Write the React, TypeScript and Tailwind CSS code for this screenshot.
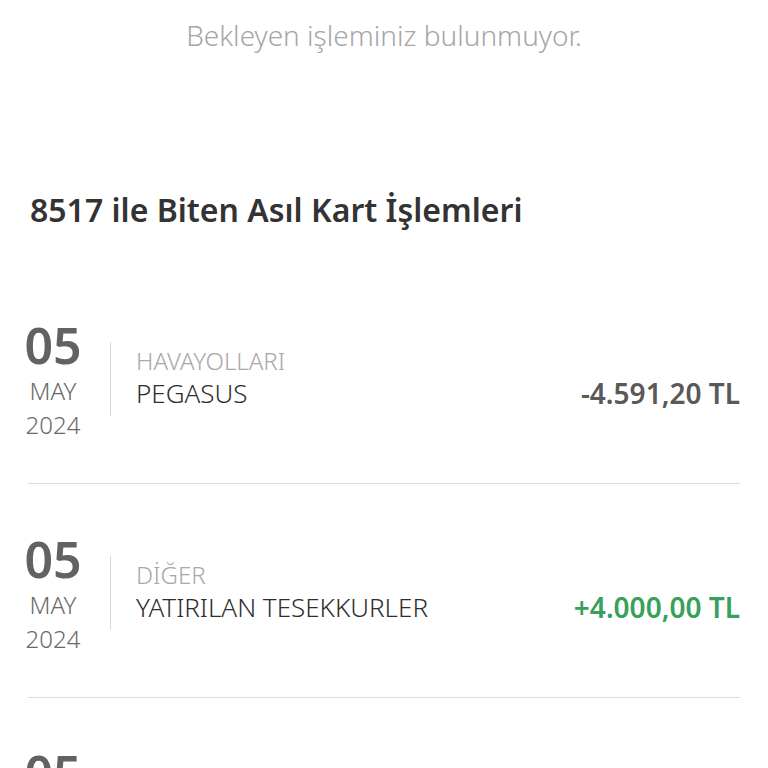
const font = { fontFamily: '"Noto Sans", "Open Sans", sans-serif' }

type Tx = {
  day: string
  month: string
  year: string
  category: string
  title: string
  amount: string
  positive?: boolean
}

const transactions: Tx[] = [
  { day: '05', month: 'MAY', year: '2024', category: 'HAVAYOLLARI', title: 'PEGASUS', amount: '-4.591,20 TL' },
  { day: '05', month: 'MAY', year: '2024', category: 'DİĞER', title: 'YATIRILAN TESEKKURLER', amount: '+4.000,00 TL', positive: true },
  { day: '05', month: 'MAY', year: '2024', category: 'MARKET', title: 'MIGROS', amount: '-250,00 TL' },
]

function TxRow({ tx }: { tx: Tx }) {
  return (
    <div className="h-[214px] shrink-0 border-b border-[#dcdcdc] pt-[50px]">
      <div className="flex items-start">
        <div className="w-[54px] -ml-[2px] flex flex-col items-center">
          <span className="text-[50px] leading-[50px] font-semibold font-stretch-semi-condensed text-[#626262]">
            {tx.day}
          </span>
          <span className="mt-[4px] text-[24px] leading-[33px] font-light text-[#6a6a6a]">{tx.month}</span>
          <span className="mt-[1px] text-[24px] leading-[33px] font-light text-[#6a6a6a]">{tx.year}</span>
        </div>
        <div className="w-px h-[74px] bg-[#d9d9d9] mt-[22px] ml-[30px]" />
        <div className="flex-1 flex items-end pl-[25px] pt-[26px]">
          <div className="flex-1 flex flex-col">
            <span className="text-[24px] leading-[30px] font-light text-[#a8a8a8]">{tx.category}</span>
            <span className="text-[26px] leading-[34px] font-light text-[#2e2e2e]">{tx.title}</span>
          </div>
          <span
            className={`text-[28px] leading-[34px] font-semibold ${tx.positive ? 'text-[#37a05b]' : 'text-[#595959]'}`}
          >
            {tx.amount}
          </span>
        </div>
      </div>
    </div>
  )
}

export default function App() {
  return (
    <div className="w-[768px] h-[768px] overflow-hidden bg-white" style={font}>
      <p className="pt-[18px] text-center text-[28px] leading-[34px] font-light text-[#a6a6a6]">
        Bekleyen işleminiz bulunmuyor.
      </p>
      <h2 className="mt-[138px] pl-[30px] text-[32px] leading-[40px] font-semibold text-[#333]">
        8517 ile Biten Asıl Kart İşlemleri
      </h2>
      <div className="mx-[28px] mt-[40px] flex flex-col">
        {transactions.map((tx, i) => (
          <TxRow key={i} tx={tx} />
        ))}
      </div>
    </div>
  )
}
